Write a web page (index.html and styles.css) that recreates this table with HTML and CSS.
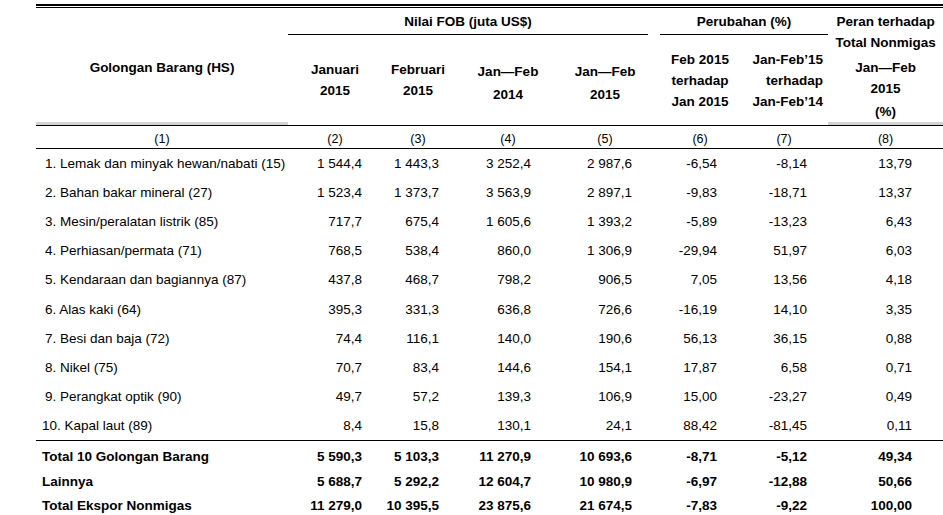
FILE: index.html
```html
<!DOCTYPE html>
<html lang="id">
<head>
<meta charset="utf-8">
<title>Ekspor Nonmigas</title>
<link rel="stylesheet" href="styles.css">
</head>
<body>
<div class="sheet">
  <table class="tbl">
    <colgroup>
      <col class="c1"><col class="c2"><col class="c3"><col class="c4"><col class="c5"><col class="cs"><col class="c6"><col class="c7"><col class="c8">
    </colgroup>
    <thead>
      <tr class="r-group">
        <th rowspan="2" class="h-name"><span class="h-name-t">Golongan Barang (HS)</span></th>
        <th colspan="4" class="h-group">Nilai FOB (juta US$)</th>
        <th rowspan="2" class="h-spacer"></th>
        <th colspan="2" class="h-group h-group-p">Perubahan (%)</th>
        <th rowspan="2" class="h-share">
          <div>Peran terhadap</div>
          <div>Total Nonmigas</div>
          <div class="gap">Jan—Feb</div>
          <div>2015</div>
          <div class="pct">(%)</div>
        </th>
      </tr>
      <tr class="r-sub">
        <th class="h-sub">Januari<br>2015</th>
        <th class="h-sub">Februari<br>2015</th>
        <th class="h-sub h-low">Jan—Feb<br>2014</th>
        <th class="h-sub h-low">Jan—Feb<br>2015</th>
        <th class="h-sub">Feb 2015<br>terhadap<br>Jan 2015</th>
        <th class="h-sub h-right">Jan-Feb’15<br>terhadap<br>Jan-Feb’14</th>
      </tr>
      <tr class="r-num">
        <td>(1)</td><td>(2)</td><td>(3)</td><td>(4)</td><td>(5)</td><td></td><td>(6)</td><td>(7)</td><td>(8)</td>
      </tr>
    </thead>
    <tbody class="data">
      <tr><td class="name">1. Lemak dan minyak hewan/nabati (15)</td><td>1 544,4</td><td>1 443,3</td><td>3 252,4</td><td>2 987,6</td><td></td><td>-6,54</td><td>-8,14</td><td>13,79</td></tr>
      <tr><td class="name">2. Bahan bakar mineral (27)</td><td>1 523,4</td><td>1 373,7</td><td>3 563,9</td><td>2 897,1</td><td></td><td>-9,83</td><td>-18,71</td><td>13,37</td></tr>
      <tr><td class="name">3. Mesin/peralatan listrik (85)</td><td>717,7</td><td>675,4</td><td>1 605,6</td><td>1 393,2</td><td></td><td>-5,89</td><td>-13,23</td><td>6,43</td></tr>
      <tr><td class="name">4. Perhiasan/permata (71)</td><td>768,5</td><td>538,4</td><td>860,0</td><td>1 306,9</td><td></td><td>-29,94</td><td>51,97</td><td>6,03</td></tr>
      <tr><td class="name">5. Kendaraan dan bagiannya (87)</td><td>437,8</td><td>468,7</td><td>798,2</td><td>906,5</td><td></td><td>7,05</td><td>13,56</td><td>4,18</td></tr>
      <tr><td class="name">6. Alas kaki (64)</td><td>395,3</td><td>331,3</td><td>636,8</td><td>726,6</td><td></td><td>-16,19</td><td>14,10</td><td>3,35</td></tr>
      <tr><td class="name">7. Besi dan baja (72)</td><td>74,4</td><td>116,1</td><td>140,0</td><td>190,6</td><td></td><td>56,13</td><td>36,15</td><td>0,88</td></tr>
      <tr><td class="name">8. Nikel (75)</td><td>70,7</td><td>83,4</td><td>144,6</td><td>154,1</td><td></td><td>17,87</td><td>6,58</td><td>0,71</td></tr>
      <tr><td class="name">9. Perangkat optik (90)</td><td>49,7</td><td>57,2</td><td>139,3</td><td>106,9</td><td></td><td>15,00</td><td>-23,27</td><td>0,49</td></tr>
      <tr class="last"><td class="name name-10">10. Kapal laut (89)</td><td>8,4</td><td>15,8</td><td>130,1</td><td>24,1</td><td></td><td>88,42</td><td>-81,45</td><td>0,11</td></tr>
    </tbody>
    <tbody class="totals">
      <tr class="first"><td class="name">Total 10 Golongan Barang</td><td>5 590,3</td><td>5 103,3</td><td>11 270,9</td><td>10 693,6</td><td></td><td>-8,71</td><td>-5,12</td><td>49,34</td></tr>
      <tr class="second"><td class="name">Lainnya</td><td>5 688,7</td><td>5 292,2</td><td>12 604,7</td><td>10 980,9</td><td></td><td>-6,97</td><td>-12,88</td><td>50,66</td></tr>
      <tr class="third"><td class="name">Total Ekspor Nonmigas</td><td>11 279,0</td><td>10 395,5</td><td>23 875,6</td><td>21 674,5</td><td></td><td>-7,83</td><td>-9,22</td><td>100,00</td></tr>
    </tbody>
  </table>
</div>
</body>
</html>
```

FILE: styles.css
```css
html, body {
  margin: 0;
  padding: 0;
  background: #ffffff;
}

body {
  font-family: "Liberation Sans", Arial, sans-serif;
  font-size: 13.5px;
  color: #000;
  overflow: hidden;
}

.sheet {
  margin: 4px 0 0 36px;
  width: 907px;
  border-top: 2px solid #000;
  padding-top: 1px;
}

.tbl {
  width: 907px;
  border-collapse: collapse;
  table-layout: fixed;
  border-top: 1px solid #000;
}

.c1 { width: 252px; }
.c2 { width: 94px; }
.c3 { width: 72px; }
.c4 { width: 108px; }
.c5 { width: 86px; }
.cs { width: 12px; }
.c6 { width: 80px; }
.c7 { width: 88px; }
.c8 { width: 115px; }

th, td {
  padding: 0;
  white-space: nowrap;
}

th {
  font-weight: bold;
  line-height: 21px;
}

/* group header row */
.r-group th {
  height: 26px;
}

.h-group {
  text-align: center;
  vertical-align: middle;
  border-bottom: 1px solid #000;
}

.h-name {
  vertical-align: middle;
  text-align: center;
  box-shadow: inset 0 -3px 0 #d3d3d3;
  border-bottom: 1px solid #000;
  padding-top: 1px;
}

.h-spacer {
  border-bottom: 1px solid #000;
}

.h-share {
  vertical-align: top;
  text-align: center;
  padding-top: 3px;
  box-shadow: inset 0 -3px 0 #d3d3d3;
  border-bottom: 1px solid #000;
}

.h-share .gap {
  margin-top: 4px;
}

.h-share .pct {
  margin-top: 2px;
}

/* sub header row */
.r-sub th {
  height: 85px;
  vertical-align: middle;
  text-align: center;
  border-bottom: 1px solid #000;
}

.r-sub .h-low {
  line-height: 23px;
  padding-top: 5px;
}

.r-sub .h-right {
  text-align: right;
  padding-right: 5px;
}

/* column number row */
.r-num td {
  height: 19px;
  text-align: center;
  vertical-align: middle;
  font-size: 12.5px;
  padding-top: 3px;
  border-bottom: 1px solid #000;
}

/* data rows */
.data td,
.totals td {
  text-align: right;
  vertical-align: middle;
}

.data tr {
  height: 29.2px;
}

.data tr.last td {
  border-bottom: 1px solid #000;
}

.totals tr.first td {
  height: 26px;
  padding-top: 3px;
}

.totals tr.second td {
  height: 24px;
}

.totals tr.third td {
  height: 23px;
}

.totals td {
  font-weight: bold;
}

td.name {
  text-align: left;
  padding-left: 9px;
}

td.name-10,
.totals td.name {
  padding-left: 6px;
}

/* right paddings per column */
tbody td:nth-child(2) { padding-right: 20px; }
tbody td:nth-child(3) { padding-right: 15px; }
tbody td:nth-child(4) { padding-right: 31px; }
tbody td:nth-child(5) { padding-right: 16px; }
tbody td:nth-child(7) { padding-right: 23px; }
tbody td:nth-child(8) { padding-right: 21px; }
tbody td:nth-child(9) { padding-right: 31px; }
```
